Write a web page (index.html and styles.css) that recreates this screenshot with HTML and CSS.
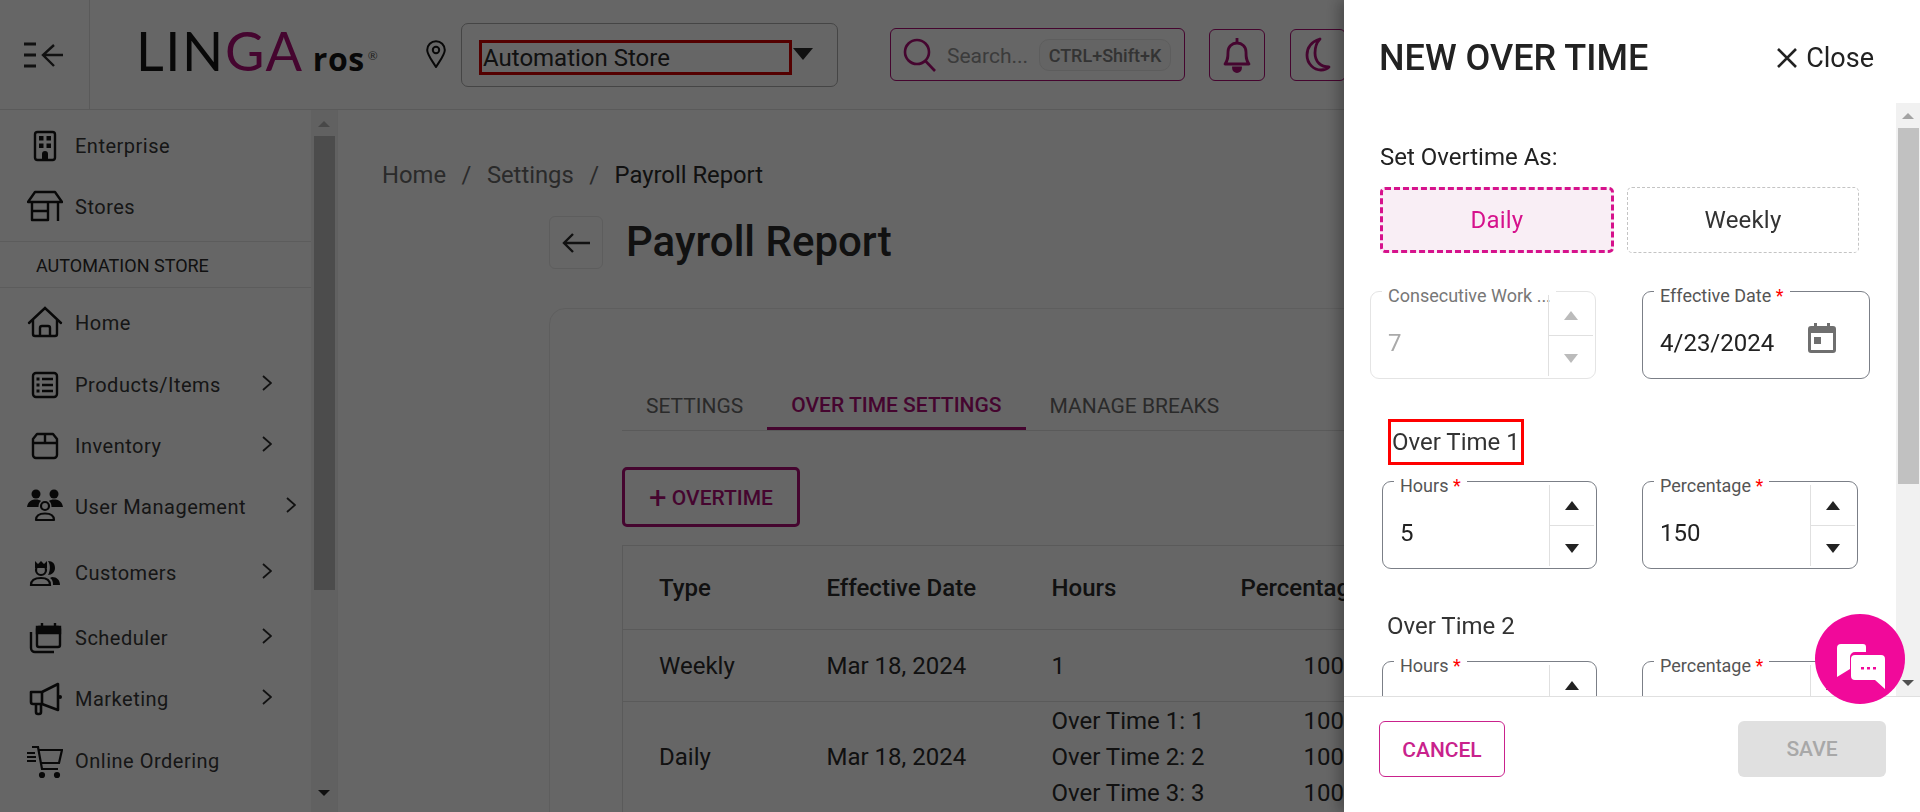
FILE: index.html

```html
<!DOCTYPE html>
<html lang="en">
<head>
  <meta charset="UTF-8">
  <title>Payroll Report</title>
  <link rel="stylesheet" href="styles.css">
</head>
<body>

  <header class="topbar">
    <div class="menu-toggle">
      <svg width="40" height="26" viewBox="0 0 40 26" fill="none" stroke="currentColor" stroke-width="3">
        <path d="M0 2H12M0 13H12M0 24H12"/>
        <path d="M39 13H20M30 3L19 13L30 24" stroke-width="2.4"/>
      </svg>
    </div>
    <div class="logo"><span>LIN</span><span class="logo-accent">GA</span><span class="logo-ros">ros</span><span class="logo-reg">®</span></div>
    <svg class="pin" width="20" height="28" viewBox="0 0 20 28" fill="none" stroke="currentColor" stroke-width="2">
      <path d="M10 27C5 19 1.200 14.500 1.200 10a8.800 8.800 0 0 1 17.600 0C18.800 14.500 15 19 10 27Z"/>
      <circle cx="10" cy="10" r="3.200"/>
    </svg>
    <div class="store-select">
      <span class="store-name">Automation Store</span>
      <span class="caret"></span>
    </div>
    <div class="search">
      <svg width="34" height="34" viewBox="0 0 34 34" fill="none" stroke="currentColor" stroke-width="2.600">
        <circle cx="14" cy="14" r="12"/>
        <path d="M22.500 23L32 33"/>
      </svg>
      <span class="search-text">Search...</span>
      <span class="kbd">CTRL+Shift+K</span>
    </div>
    <div class="icon-btn">
      <svg width="30" height="36" viewBox="0 0 30 36" fill="none" stroke="currentColor" stroke-width="2.800">
        <path d="M3 27C6 23 6 20 6 15C6 9.500 10 6 15 6C20 6 24 9.500 24 15C24 20 24 23 27 27Z" stroke-linejoin="round"/>
        <path d="M15 1V6"/>
        <path d="M11.500 31a3.500 3.500 0 0 0 7 0Z" fill="currentColor"/>
      </svg>
    </div>
    <div class="icon-btn">
      <svg width="30" height="36" viewBox="0 0 30 36" fill="none" stroke="currentColor" stroke-width="2.800">
        <path d="M17 2C8 5 4 11 4 18C4 27 11 33 18 33C22 33 25 31 26 30C18 30 12 25 12 16C12 10 14 5 17 2Z" stroke-linejoin="round"/>
      </svg>
    </div>
  </header>

  <div class="layout">
    <aside class="sidebar">
      <nav class="side-nav">
        <a class="nav-item nav-first">
          <svg class="nav-icon" viewBox="0 0 36 36" fill="none" stroke="currentColor" stroke-width="2.400">
            <rect x="8" y="4" width="20" height="28" rx="2.500"/>
            <path d="M12 8h4.500v4.500h-4.500zM19.500 8h4.500v4.500h-4.500zM12 15.500h4.500v4.500h-4.500zM19.500 15.500h4.500v4.500h-4.500zM15 32v-6a3 3 0 0 1 6 0v6z" fill="currentColor" stroke="none"/>
          </svg>
          <span>Enterprise</span>
        </a>
        <a class="nav-item nav-last">
          <svg class="nav-icon" viewBox="0 0 36 36" fill="none" stroke="currentColor" stroke-width="2.400">
            <path d="M8 3H28L35 13H1Z" stroke-linejoin="round"/>
            <path d="M5 13V31H21V13M5 22H21M31 13V32" stroke-linejoin="round"/>
          </svg>
          <span>Stores</span>
        </a>
        <div class="nav-heading">AUTOMATION STORE</div>
        <a class="nav-item">
          <svg class="nav-icon" viewBox="0 0 36 36" fill="none" stroke="currentColor" stroke-width="2.400">
            <path d="M2 18L18 3L34 18" stroke-linecap="round"/>
            <path d="M6 15V29a2 2 0 0 0 2 2H28a2 2 0 0 0 2-2V15"/>
            <path d="M13 31V23a2 2 0 0 1 2-2H21a2 2 0 0 1 2 2V31"/>
          </svg>
          <span>Home</span>
        </a>
        <a class="nav-item gap-1">
          <svg class="nav-icon" viewBox="0 0 36 36" fill="none" stroke="currentColor" stroke-width="2.400">
            <rect x="6" y="6" width="24" height="24" rx="3"/>
            <path d="M15 12H26M15 18H26M15 24H26"/>
            <path d="M9.500 12h3M9.500 18h3M9.500 24h3" stroke-width="3"/>
          </svg>
          <span>Products/Items</span>
          <svg class="chevron" viewBox="0 0 10 16" fill="none" stroke="currentColor" stroke-width="1.800"><path d="M1 1L9 8L1 15"/></svg>
        </a>
        <a class="nav-item">
          <svg class="nav-icon" viewBox="0 0 36 36" fill="none" stroke="currentColor" stroke-width="2.400">
            <path d="M10 6H26L30 11V27a3 3 0 0 1-3 3H9a3 3 0 0 1-3-3V11Z" stroke-linejoin="round"/>
            <path d="M6 15H30M18 6V15"/>
          </svg>
          <span>Inventory</span>
          <svg class="chevron" viewBox="0 0 10 16" fill="none" stroke="currentColor" stroke-width="1.800"><path d="M1 1L9 8L1 15"/></svg>
        </a>
        <a class="nav-item nav-wide">
          <svg class="nav-icon" viewBox="0 0 36 36" fill="currentColor">
            <circle cx="9" cy="5" r="4.500"/>
            <circle cx="27" cy="5" r="4.500"/>
            <path d="M0 18C1 12 5 10.500 9 10.500C11 10.500 13 11 14 12C12 13.500 11.500 16 11.500 18Z"/>
            <path d="M36 18C35 12 31 10.500 27 10.500C25 10.500 23 11 22 12C24 13.500 24.500 16 24.500 18Z"/>
            <circle cx="18" cy="17" r="4" fill="none" stroke="currentColor" stroke-width="2.200"/>
            <path d="M9 31C9 26 13 24.500 18 24.500C23 24.500 27 26 27 31Z" fill="none" stroke="currentColor" stroke-width="2.200" stroke-linejoin="round"/>
          </svg>
          <span>User Management</span>
          <svg class="chevron" viewBox="0 0 10 16" fill="none" stroke="currentColor" stroke-width="1.800"><path d="M1 1L9 8L1 15"/></svg>
        </a>
        <a class="nav-item gap-5">
          <svg class="nav-icon" viewBox="0 0 36 36" fill="currentColor">
            <path d="M8 6L11 9L14 6L17 9L20 6V13H8Z"/>
            <circle cx="14" cy="15" r="5" fill="none" stroke="currentColor" stroke-width="2.200"/>
            <path d="M4 30C4 25 8 23 14 23C20 23 23 25 23 30Z" fill="none" stroke="currentColor" stroke-width="2.200"/>
            <path d="M21 6C26 6 28 9 28 13C28 17 25 20 21 20C23 17 24 10 21 6Z"/>
            <path d="M25 22C30 22 33 25 33 30H26C26 26 25 24 23 23Z"/>
          </svg>
          <span>Customers</span>
          <svg class="chevron" viewBox="0 0 10 16" fill="none" stroke="currentColor" stroke-width="1.800"><path d="M1 1L9 8L1 15"/></svg>
        </a>
        <a class="nav-item gap-4">
          <svg class="nav-icon" viewBox="0 0 36 36" fill="none" stroke="currentColor" stroke-width="2.400">
            <rect x="10" y="7" width="23" height="20" rx="2"/>
            <path d="M10 7H33V13H10Z" fill="currentColor"/>
            <path d="M15 3V7M28 3V7"/>
            <path d="M4 12V28a4 4 0 0 0 4 4H27"/>
          </svg>
          <span>Scheduler</span>
          <svg class="chevron" viewBox="0 0 10 16" fill="none" stroke="currentColor" stroke-width="1.800"><path d="M1 1L9 8L1 15"/></svg>
        </a>
        <a class="nav-item">
          <svg class="nav-icon" viewBox="0 0 36 36" fill="none" stroke="currentColor" stroke-width="2.600">
            <path d="M4 11H15L31 3V29L15 23H6a2 2 0 0 1-2-2Z" stroke-linejoin="round"/>
            <path d="M15 11V23"/>
            <path d="M9 23V31a2 2 0 0 0 2 2H12a2 2 0 0 0 2-2V23" />
            <circle cx="33" cy="16" r="2" fill="currentColor" stroke="none"/>
          </svg>
          <span>Marketing</span>
          <svg class="chevron" viewBox="0 0 10 16" fill="none" stroke="currentColor" stroke-width="1.800"><path d="M1 1L9 8L1 15"/></svg>
        </a>
        <a class="nav-item gap-1">
          <svg class="nav-icon" viewBox="0 0 36 36" fill="none" stroke="currentColor" stroke-width="2.200">
            <path d="M5 4H11L15 26H31"/>
            <path d="M12 7H35L32 20H14"/>
            <path d="M0 10H8M0 14H9M0 18H9" stroke-width="1.800"/>
            <circle cx="15" cy="32" r="2" fill="currentColor"/>
            <circle cx="30" cy="32" r="2" fill="currentColor"/>
          </svg>
          <span>Online Ordering</span>
        </a>
      </nav>
      <div class="side-scroll">
        <span class="arrow-up"></span>
        <div class="side-thumb"></div>
        <span class="arrow-down"></span>
      </div>
    </aside>

    <main class="content">
      <div class="breadcrumb">
        <span>Home</span><span class="crumb-sep">/</span><span>Settings</span><span class="crumb-sep">/</span><span class="crumb-current">Payroll Report</span>
      </div>
      <div class="page-head">
        <div class="back-btn">
          <svg width="28" height="20" viewBox="0 0 28 20" fill="none" stroke="currentColor" stroke-width="2.400"><path d="M28 10H2M11 1L2 10L11 19"/></svg>
        </div>
        <h1>Payroll Report</h1>
      </div>
      <section class="card">
        <div class="tabs">
          <div class="tab">SETTINGS</div>
          <div class="tab tab-active">OVER TIME SETTINGS</div>
          <div class="tab">MANAGE BREAKS</div>
        </div>
        <button class="add-btn"><span class="plus">+</span> OVERTIME</button>
        <table class="ot-table">
          <thead>
            <tr><th class="col-type">Type</th><th class="col-date">Effective Date</th><th class="col-hours">Hours</th><th class="col-pct">Percentage</th></tr>
          </thead>
          <tbody>
            <tr class="row-one"><td>Weekly</td><td>Mar 18, 2024</td><td>1</td><td class="pct">100</td></tr>
            <tr class="row-multi">
              <td>Daily</td>
              <td>Mar 18, 2024</td>
              <td><div>Over Time 1: 1</div><div>Over Time 2: 2</div><div>Over Time 3: 3</div></td>
              <td class="pct"><div>100</div><div>100</div><div>100</div></td>
            </tr>
          </tbody>
        </table>
      </section>
    </main>
  </div>

  <div class="backdrop"></div>

  <aside class="drawer">
    <div class="drawer-head">
      <h2>NEW OVER TIME</h2>
      <div class="close">
        <svg width="20" height="20" viewBox="0 0 20 20" fill="none" stroke="currentColor" stroke-width="2.600"><path d="M1 1L19 19M19 1L1 19"/></svg>
        <span>Close</span>
      </div>
    </div>
    <div class="drawer-body">
      <div class="form">
        <div class="set-label">Set Overtime As:</div>
        <div class="toggle-row">
          <div class="toggle toggle-on">Daily</div>
          <div class="toggle">Weekly</div>
        </div>
        <div class="field-row row-top">
          <div class="field field-off">
            <div class="field-label label-long">Consecutive Work ...</div>
            <div class="field-value">7</div>
            <div class="spin"><div class="spin-up"><span class="arrow-up"></span></div><div class="spin-down"><span class="arrow-down"></span></div></div>
          </div>
          <div class="field field-date">
            <div class="field-label">Effective Date <em>*</em></div>
            <div class="field-value">4/23/2024</div>
            <svg class="cal" width="28" height="30" viewBox="0 0 28 30" fill="#6f6f6f">
              <path d="M6 0H9V3H19V0H22V3H25a3 3 0 0 1 3 3V27a3 3 0 0 1-3 3H3a3 3 0 0 1-3-3V6a3 3 0 0 1 3-3H6ZM3 10V27H25V10Z"/>
              <rect x="6" y="14" width="7" height="7"/>
            </svg>
          </div>
        </div>
        <div class="ot-head ot-marked"><span>Over Time 1</span></div>
        <div class="field-row">
          <div class="field field-a">
            <div class="field-label">Hours <em>*</em></div>
            <div class="field-value">5</div>
            <div class="spin"><div class="spin-up"><span class="arrow-up"></span></div><div class="spin-down"><span class="arrow-down"></span></div></div>
          </div>
          <div class="field field-b">
            <div class="field-label">Percentage <em>*</em></div>
            <div class="field-value">150</div>
            <div class="spin"><div class="spin-up"><span class="arrow-up"></span></div><div class="spin-down"><span class="arrow-down"></span></div></div>
          </div>
        </div>
        <div class="ot-head ot-second"><span>Over Time 2</span></div>
        <div class="field-row">
          <div class="field field-a">
            <div class="field-label">Hours <em>*</em></div>
            <div class="spin"><div class="spin-up"><span class="arrow-up"></span></div><div class="spin-down"><span class="arrow-down"></span></div></div>
          </div>
          <div class="field field-b">
            <div class="field-label">Percentage <em>*</em></div>
            <div class="spin"><div class="spin-up"><span class="arrow-up"></span></div><div class="spin-down"><span class="arrow-down"></span></div></div>
          </div>
        </div>
      </div>
      <div class="drawer-scroll">
        <span class="arrow-up"></span>
        <div class="drawer-thumb"></div>
        <span class="arrow-down"></span>
      </div>
    </div>
    <div class="drawer-foot">
      <button class="cancel">CANCEL</button>
      <button class="save">SAVE</button>
    </div>
  </aside>

  <div class="chat">
    <svg width="48" height="46" viewBox="0 0 48 46" fill="#fff">
      <path d="M4 0H26a3 3 0 0 1 3 3V8H18a5 5 0 0 0-5 5V25L0 33V4A4 4 0 0 1 4 0Z"/>
      <path d="M18 11H44a4 4 0 0 1 4 4V45L38 36H18a4 4 0 0 1-4-4V15a4 4 0 0 1 4-4Z"/>
      <path d="M24 23h3v2.500h-3zM30 23h3v2.500h-3zM36 23h3v2.500h-3z" fill="#f1099a"/>
    </svg>
  </div>

</body>
</html>
```

FILE: styles.css

```css
html, body {
  margin: 0;
  height: 812px;
  overflow: hidden;
}
body {
  font-family: Roboto, "Liberation Sans", sans-serif;
  color: #222;
  background: #ccc;
}
h1, h2 {
  margin: 0;
}

/* top bar */
.topbar {
  height: 109px;
  border-bottom: 1px solid #b4b4b4;
  display: flex;
  align-items: center;
}
.menu-toggle {
  width: 90px;
  height: 109px;
  border-right: 1px solid #b4b4b4;
  padding-left: 24px;
  box-sizing: border-box;
  display: flex;
  align-items: center;
}
.logo {
  margin-left: 46px;
  width: 244px;
  font-family: Lato, sans-serif;
  font-size: 54px;
  line-height: 54px;
  letter-spacing: 1.600px;
  color: #111;
  display: flex;
  align-items: baseline;
  white-space: nowrap;
}
.logo-accent {
  color: #8a0a5e;
}
.logo-ros {
  font-family: "Open Sans", sans-serif;
  font-weight: 700;
  font-size: 32px;
  letter-spacing: 0.600px;
  margin-left: 9px;
}
.logo-reg {
  font-size: 12px;
  letter-spacing: 0;
  margin-left: 3px;
  align-self: flex-start;
  margin-top: 26px;
  line-height: 12px;
  color: #444;
}
.pin {
  margin-left: 46px;
  margin-top: -1px;
  color: #111;
}
.store-select {
  margin-left: 15px;
  width: 377px;
  height: 64px;
  border: 1px solid #8a8a8a;
  border-radius: 7px;
  box-sizing: border-box;
  display: flex;
  align-items: center;
  padding-left: 17px;
}
.store-name {
  width: 313px;
  height: 35px;
  box-sizing: border-box;
  border: 3px solid #a80000;
  font-size: 24px;
  line-height: 31px;
  padding-left: 1px;
  margin-top: 5px;
}
.caret {
  margin-left: 1px;
  margin-top: -2px;
  border-left: 10px solid transparent;
  border-right: 10px solid transparent;
  border-top: 12px solid #222;
}
.search {
  margin-left: 52px;
  width: 295px;
  height: 53px;
  border: 1px solid #8a0a5e;
  border-radius: 6px;
  box-sizing: border-box;
  color: #8a0a5e;
  display: flex;
  align-items: center;
  padding-left: 12px;
}
.search-text {
  color: #777;
  font-size: 21px;
  margin-left: 10px;
  margin-top: 2px;
  width: 92px;
}
.kbd {
  width: 132px;
  height: 32px;
  border: 1px solid #bbb;
  border-radius: 10px;
  background: #c8c8c8;
  color: #666;
  box-sizing: border-box;
  font-size: 18px;
  font-weight: 500;
  line-height: 32px;
  text-align: center;
  margin-top: 1px;
}
.icon-btn {
  width: 56px;
  height: 52px;
  margin-left: 24px;
  flex: none;
  border: 1px solid #8a0a5e;
  border-radius: 6px;
  box-sizing: border-box;
  color: #8a0a5e;
  display: flex;
  align-items: center;
  justify-content: center;
}
.icon-btn + .icon-btn {
  margin-left: 25px;
}

/* page below the bar */
.layout {
  display: flex;
  height: 702px;
}
.sidebar {
  width: 338px;
  flex: none;
  display: flex;
  border-right: 1px solid #c0c0c0;
  box-sizing: border-box;
  overflow: hidden;
}
.side-nav {
  width: 311px;
  flex: none;
}
.nav-item {
  height: 61px;
  display: flex;
  align-items: center;
  padding-left: 27px;
  font-size: 20px;
  letter-spacing: 0.500px;
  color: #2c2c2c;
}
.nav-first {
  height: 52px;
  margin-top: 10px;
}
.nav-last {
  height: 69px;
  border-bottom: 1px solid #b8b8b8;
}
.gap-1 {
  margin-top: 1px;
}
.gap-4 {
  margin-top: 4px;
}
.gap-5 {
  margin-top: 5px;
}
.nav-icon {
  width: 36px;
  height: 36px;
  margin-right: 12px;
  flex: none;
  color: #111;
}
.chevron {
  width: 10px;
  height: 16px;
  margin-left: auto;
  margin-right: 39px;
  margin-top: -3px;
  color: #222;
}
.nav-wide .chevron {
  margin-right: 15px;
}
.nav-heading {
  height: 46px;
  border-bottom: 1px solid #b8b8b8;
  box-sizing: border-box;
  padding-left: 36px;
  font-size: 18px;
  line-height: 47px;
  color: #222;
  margin-bottom: 4px;
}
.side-scroll {
  width: 26px;
  flex: none;
  background: #c2c2c2;
  display: flex;
  flex-direction: column;
  align-items: center;
  padding-top: 11px;
  box-sizing: border-box;
  height: 702px;
}
.side-thumb {
  width: 21px;
  height: 454px;
  background: #999;
  margin-top: 9px;
  margin-bottom: 200px;
}
.arrow-up {
  display: block;
  border-left: 6px solid transparent;
  border-right: 6px solid transparent;
  border-bottom: 6px solid #909090;
}
.arrow-down {
  display: block;
  border-left: 6px solid transparent;
  border-right: 6px solid transparent;
  border-top: 6px solid #222;
}

.content {
  flex: 1;
  overflow: hidden;
  padding-top: 50px;
}
.breadcrumb {
  padding-left: 44px;
  font-size: 23.800px;
  line-height: 30px;
  color: #555;
  white-space: nowrap;
}
.crumb-sep {
  margin: 0 15.500px;
}
.crumb-current {
  color: #222;
}
.page-head {
  display: flex;
  align-items: center;
  margin-left: 211px;
  margin-top: 26px;
}
.back-btn {
  width: 54px;
  height: 53px;
  border: 1px solid #bbb;
  border-radius: 6px;
  box-sizing: border-box;
  display: flex;
  align-items: center;
  justify-content: center;
}
h1 {
  font-size: 42px;
  font-weight: 500;
  margin-left: 23px;
  margin-top: -2px;
  line-height: 50px;
}
.card {
  margin-left: 211px;
  margin-top: 39px;
  width: 1300px;
  border: 1px solid #bdbdbd;
  border-radius: 16px;
  padding: 72px 0 0 72px;
  box-sizing: border-box;
  height: 600px;
}
.tabs {
  display: flex;
  height: 49px;
  border-bottom: 1px solid #b4b4b4;
  font-size: 21px;
}
.tab {
  padding: 13px 24px 0;
  color: #555;
  height: 49px;
  box-sizing: border-box;
}
.tab-active {
  color: #8a0a5e;
  font-weight: 500;
  padding-top: 12px;
  border-bottom: 3px solid #8a0a5e;
}
.add-btn {
  display: block;
  margin-top: 36px;
  width: 178px;
  height: 60px;
  background: none;
  border: 3px solid #8a0a5e;
  border-radius: 5px;
  color: #8a0a5e;
  font-family: inherit;
  font-size: 21px;
  font-weight: 500;
  padding: 2px 0 0;
}
.plus {
  font-size: 31px;
  font-weight: 400;
  line-height: 20px;
  vertical-align: -3px;
}
.ot-table {
  margin-top: 18px;
  width: 1200px;
  border-collapse: collapse;
  border-left: 1px solid #b4b4b4;
  border-top: 1px solid #b4b4b4;
  font-size: 24px;
  text-align: left;
}
.ot-table th {
  height: 83px;
  font-weight: 500;
  padding: 0;
  border-bottom: 1px solid #b4b4b4;
}
.ot-table td {
  padding: 0;
  border-bottom: 1px solid #b4b4b4;
}
.col-type {
  width: 204px;
}
.col-date {
  width: 225px;
}
.col-hours {
  width: 189px;
}
.ot-table th:first-child, .ot-table td:first-child {
  padding-left: 36px;
  box-sizing: border-box;
}
.row-one td {
  height: 71px;
}
.row-multi td {
  height: 110px;
  line-height: 36px;
}
.pct {
  padding-left: 63px !important;
}

/* dim layer and drawer */
.backdrop {
  position: fixed;
  inset: 0;
  background: rgba(0, 0, 0, 0.5);
}
.drawer {
  position: fixed;
  top: 0;
  right: 0;
  bottom: 0;
  width: 576px;
  background: #fff;
  box-shadow: -6px 0 12px rgba(0, 0, 0, 0.25);
  display: flex;
  flex-direction: column;
}
.drawer-head {
  height: 103px;
  flex: none;
  display: flex;
  align-items: center;
  justify-content: space-between;
  padding: 0 46px 0 35px;
  box-sizing: border-box;
}
.drawer-head h2 {
  font-size: 36px;
  font-weight: 500;
  line-height: 40px;
  margin-top: 12px;
}
.close {
  display: flex;
  align-items: center;
  gap: 9px;
  font-size: 27px;
  margin-top: 12px;
}
.drawer-body {
  flex: 1;
  min-height: 0;
  display: flex;
  overflow: hidden;
}
.form {
  width: 552px;
  flex: none;
  padding-left: 36px;
  box-sizing: border-box;
}
.set-label {
  font-size: 24px;
  line-height: 30px;
  margin-top: 39px;
}
.toggle-row {
  display: flex;
  gap: 13px;
  margin-top: 15px;
}
.toggle {
  width: 232px;
  height: 66px;
  border: 1px dashed #c4c4c4;
  border-radius: 5px;
  box-sizing: border-box;
  font-size: 24px;
  letter-spacing: 0.200px;
  line-height: 64px;
  text-align: center;
  color: #333;
}
.toggle-on {
  width: 234px;
  border: 3px dashed #d6128c;
  background: #f9eef5;
  color: #d6128c;
  line-height: 60px;
}
.field-row {
  display: flex;
  margin-left: 2px;
}
.row-top {
  margin-left: -10px;
  margin-top: 38px;
}
.field {
  position: relative;
  height: 88px;
  border: 1px solid #7b7f87;
  border-radius: 9px;
  box-sizing: border-box;
  flex: none;
}
.field-off {
  width: 226px;
  margin-right: 46px;
  border-color: #e4e4e4;
  color: #aaa;
}
.field-date {
  width: 228px;
}
.field-a {
  width: 215px;
  margin-right: 45px;
}
.field-b {
  width: 216px;
}
.field-label {
  position: absolute;
  top: -8px;
  left: 11px;
  background: #fff;
  padding: 0 6px;
  font-size: 18px;
  line-height: 24px;
  color: #555;
  white-space: nowrap;
}
.field-label em {
  color: #f00;
  font-style: normal;
}
.label-long {
  color: #777;
  width: 174px;
  box-sizing: border-box;
}
.field-value {
  font-size: 24px;
  line-height: 30px;
  padding: 36px 0 0 17px;
}
.field-off .field-value {
  color: #aaa;
}
.cal {
  position: absolute;
  top: 31px;
  right: 33px;
}
.spin {
  position: absolute;
  top: 3px;
  right: 2px;
  bottom: 2px;
  width: 44px;
  border-left: 1px solid #e0e0e0;
  display: flex;
  flex-direction: column;
}
.spin-up, .spin-down {
  flex: 1;
  display: flex;
  align-items: center;
  justify-content: center;
}
.spin-up {
  border-bottom: 1px solid #e0e0e0;
}
.spin .arrow-up {
  border-left-width: 7.500px;
  border-right-width: 7.500px;
  border-bottom: 9px solid #222;
}
.spin .arrow-down {
  margin-top: 4px;
  border-left-width: 7.500px;
  border-right-width: 7.500px;
  border-top: 9px solid #222;
}
.field-off .arrow-up {
  border-bottom-color: #bbb;
}
.field-off .arrow-down {
  border-top-color: #bbb;
}
.ot-head {
  font-size: 24px;
  line-height: 30px;
  color: #333;
}
.ot-marked {
  margin-top: 40px;
  margin-bottom: 16px;
  margin-left: 8px;
}
.ot-marked span {
  display: inline-block;
  border: 3px solid #f00;
  padding: 5px 1px 5px 1px;
}
.ot-second {
  margin-top: 42px;
  margin-bottom: 20px;
  margin-left: 7px;
}
.drawer-scroll {
  width: 24px;
  flex: none;
  background: #f1f1f1;
  display: flex;
  flex-direction: column;
  align-items: center;
  padding-top: 10px;
  box-sizing: border-box;
}
.drawer-scroll .arrow-up {
  border-bottom-color: #a3a3a3;
}
.drawer-scroll .arrow-down {
  border-top-color: #505050;
}
.drawer-thumb {
  width: 21px;
  height: 356px;
  background: #c1c1c1;
  margin-top: 9px;
  margin-bottom: 196px;
}
.drawer-foot {
  height: 116px;
  flex: none;
  border-top: 1px solid #e0e0e0;
  box-sizing: border-box;
  display: flex;
  align-items: flex-start;
  justify-content: space-between;
  padding: 24px 34px 0 35px;
}
.drawer-foot button {
  height: 56px;
  border-radius: 6px;
  font-family: Roboto, sans-serif;
  font-size: 21px;
  font-weight: 500;
  padding: 0;
}
.drawer-foot .cancel {
  width: 126px;
  background: #fff;
  border: 1px solid #c9228c;
  color: #c9228c;
  padding-top: 2px;
}
.save {
  width: 148px;
  background: #e0e0e0;
  border: none;
  color: #a8a8a8;
}
.chat {
  position: fixed;
  left: 1815px;
  top: 614px;
  width: 90px;
  height: 90px;
  border-radius: 50%;
  background: #f1099a;
  display: flex;
  align-items: center;
  justify-content: center;
  padding: 16px 0 0 2px;
  box-sizing: border-box;
}
```
